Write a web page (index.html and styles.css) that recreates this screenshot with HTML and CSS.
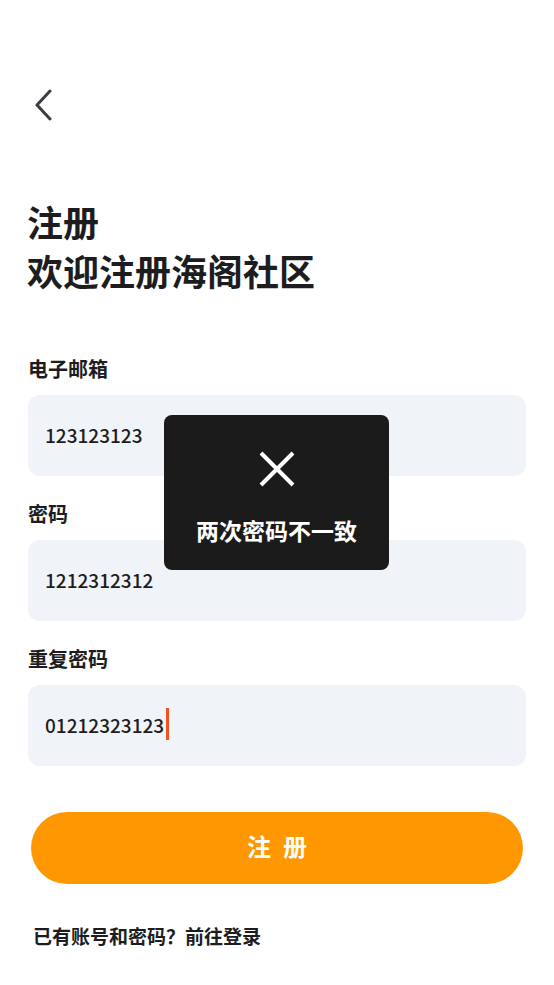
FILE: index.html
```html
<!doctype html>
<html lang="zh-CN">
<head>
 <meta charset="UTF-8">
 <meta name="viewport" content="width=device-width, user-scalable=no, initial-scale=1.0">
 <title>注册</title>
 <link rel="stylesheet" href="styles.css">
</head>
<body>
<div class="page">
 <div class="top">
  <a href="#" class="back">
   <svg width="20" height="32" viewBox="0 0 20 32"><path d="M17 2 L4 16 L17 30" fill="none" stroke="#3c3c42" stroke-width="3" stroke-linecap="round" stroke-linejoin="round"/></svg>
  </a>
 </div>

 <h1 class="title">注册<br>欢迎注册海阁社区</h1>

 <div class="form">
  <div class="field">
   <div class="label">电子邮箱</div>
   <div class="input">123123123</div>
  </div>
  <div class="field">
   <div class="label">密码</div>
   <div class="input">1212312312</div>
  </div>
  <div class="field">
   <div class="label">重复密码</div>
   <div class="input">01212323123<i class="caret"></i></div>
  </div>
 </div>

 <a href="#" class="btn"><span>注</span><span>册</span></a>

 <p class="tip">已有账号和密码？前往登录</p>
</div>

<div class="toast">
 <svg width="36" height="36" viewBox="0 0 36 36"><path d="M2 2 L34 34 M34 2 L2 34" stroke="#fff" stroke-width="4"/></svg>
 <div class="toast-text">两次密码不一致</div>
</div>
</body>
</html>
```

FILE: styles.css
```css
*{
 margin:0;
 padding:0;
 box-sizing:border-box;
}
html,body{
 height:100%;
 overflow:hidden;
 background:#fff;
}
body{
 font-family:"Noto Sans CJK SC","Noto Sans",sans-serif;
 color:#1d1d1f;
}
a{
 text-decoration:none;
 color:inherit;
}
.page{
 padding:0 28px;
}
.top{
 padding-top:89px;
 height:197px;
}
.back{
 display:block;
 width:20px;
 margin-left:5px;
}
.back svg{
 display:block;
}
.title{
 font-size:36px;
 line-height:49px;
 font-weight:700;
 margin-left:-1px;
}
.form{
 margin-top:60px;
}
.field{
 margin-bottom:24px;
}
.label{
 font-size:20px;
 line-height:28px;
 font-weight:700;
 margin-bottom:12px;
}
.input{
 display:flex;
 align-items:center;
 height:81px;
 padding:0 0 3px 17px;
 border-radius:12px;
 background:#f0f3f8;
 font-size:19px;
 font-weight:500;
}
.caret{
 display:inline-block;
 width:3px;
 height:32px;
 margin-left:2px;
 background:#f4511e;
}
.btn{
 display:flex;
 justify-content:center;
 align-items:center;
 gap:12px;
 height:72px;
 margin:46px 3px 0;
 padding-bottom:6px;
 border-radius:36px;
 background:#ff9800;
 color:#fff;
 font-size:24px;
 font-weight:700;
}
.tip{
 margin-top:38px;
 padding-left:5px;
 font-size:19px;
 line-height:28px;
 font-weight:700;
}
.toast{
 position:fixed;
 left:164px;
 top:415px;
 width:225px;
 height:155px;
 padding-top:36px;
 border-radius:8px;
 background:#1b1b1b;
 color:#fff;
 text-align:center;
}
.toast svg{
 display:block;
 margin:0 auto;
}
.toast-text{
 margin-top:28px;
 font-size:23px;
 line-height:30px;
 font-weight:700;
}
```
